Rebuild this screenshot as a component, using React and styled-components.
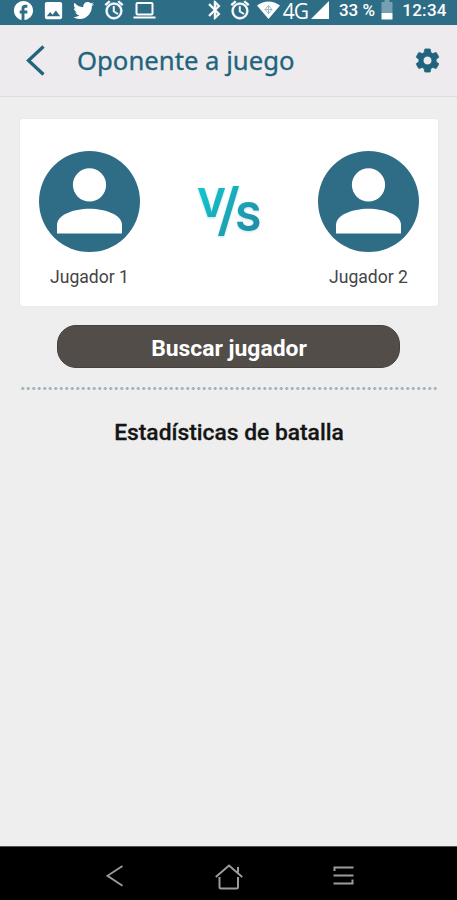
import React from 'react'
import styled, { createGlobalStyle } from 'styled-components'
import {
  MdAlarm,
  MdBluetooth,
  MdFacebook,
  MdImage,
  MdSettings,
} from 'react-icons/md'
import { FaTwitter } from 'react-icons/fa'

const GlobalStyle = createGlobalStyle`
  * {
    box-sizing: border-box;
  }

  body {
    margin: 0;
    background: #eee;
    font-family: Roboto, sans-serif;
  }
`

const Screen = styled.div`
  display: flex;
  flex-direction: column;
  height: 900px;
  overflow: hidden;
  background: #eee;
`

const StatusBar = styled.div`
  display: flex;
  flex: none;
  justify-content: space-between;
  height: 25px;
  padding: 0 10px 0 12px;
  background: #2e6d86;
  color: #fff;
`

const StatusGroup = styled.div`
  display: flex;
  align-items: center;
  height: 20px;
`

const StatusItem = styled.span`
  display: flex;
  flex: none;
  align-items: center;
  justify-content: center;
  width: ${props => props.$width}px;
  height: 20px;
  margin-left: ${props => props.$gap || 0}px;

  svg {
    flex: none;
  }
`

const BoldItem = styled(StatusItem)`
  path:not([fill='none']) {
    stroke: currentColor;
    stroke-width: 0.6px;
  }
`

const StatusText = styled(StatusItem)`
  font-size: 17px;
  font-weight: 500;
  line-height: 20px;
  letter-spacing: ${props => props.$spacing || 0}px;
  white-space: nowrap;
`

const Network = styled(StatusText)`
  padding-top: 2px;
  font-family: 'Open Sans', sans-serif;
  font-size: 21px;
  font-weight: 400;
`

const Header = styled.header`
  display: flex;
  flex: none;
  align-items: center;
  height: 72px;
  padding: 0 15px 0 26px;
  border-bottom: 1px solid #dcdbdd;
  background: #edebee;
  color: #20647d;
`

const Title = styled.h1`
  flex-grow: 1;
  margin: 0 0 0 31px;
  font-family: 'Noto Sans', sans-serif;
  font-size: 25.7px;
  font-weight: 400;
  line-height: 34px;
  -webkit-text-stroke: 0.3px #20647d;
`

const Main = styled.main`
  flex-grow: 1;
  padding: 22px 19px 0 20px;
`

const Card = styled.section`
  display: flex;
  justify-content: space-between;
  height: 187px;
  padding: 32px 19px 0;
  border-radius: 3px;
  background: #fff;
  box-shadow: 0 0 2px rgba(0, 0, 0, 0.07);
`

const PlayerColumn = styled.div`
  display: flex;
  flex-direction: column;
  align-items: center;
  width: 101px;
`

const PlayerName = styled.div`
  margin-top: 14px;
  color: #444;
  font-size: 17.6px;
  line-height: 22px;
  white-space: nowrap;
`

const VersusLogo = styled.svg`
  width: 76px;
  height: 60px;
  margin-top: 30px;
  overflow: visible;
  font-family: Inter, sans-serif;
  font-weight: 700;
  filter: drop-shadow(0 1px 1px rgba(30, 160, 180, 0.3));
`

const SearchButton = styled.button`
  display: block;
  width: 343px;
  height: 43px;
  margin: 19px 0 0 37px;
  padding: 4px 0 0 1px;
  border: 1px solid #45413e;
  border-radius: 19px;
  background: #524d49;
  color: #fff;
  font-family: Roboto, sans-serif;
  font-size: 22.9px;
  font-weight: 700;
`

const Divider = styled.div`
  height: 3px;
  margin-top: 19px;
  background: radial-gradient(circle, #9bb4bc 1.2px, transparent 1.8px) 0 0 / 5.5px 3px repeat-x;
`

const SectionTitle = styled.h2`
  margin: 28px 0 0;
  color: #151515;
  font-size: 22.8px;
  font-weight: 500;
  line-height: 30px;
  text-align: center;
  -webkit-text-stroke: 0.3px #151515;
`

const NavBar = styled.nav`
  display: flex;
  flex: none;
  justify-content: space-between;
  height: 54px;
  padding: 17px 103px 0 106px;
  border-top: 1px solid #555;
  background: #000;
  color: #9c9c9c;
`

const LaptopIcon = () => (
  <svg width="23" height="18" viewBox="0 0 23 18" fill="none" stroke="currentColor">
    <rect x="3.5" y="2" width="16" height="11.5" rx="1" strokeWidth="2" />
    <path d="M.5 16.5h22" strokeWidth="2" />
  </svg>
)

const WifiIcon = () => (
  <svg width="23" height="18" viewBox="0 0 23 18">
    <path d="M0 4.5Q11.500-3.500 23 4.500L11.500 18Z" fill="currentColor" />
    <path d="M11.500 4.500l3.500 4-3.500 4-3.500-4zM11.500 4.500v8M8 8.500h7" fill="none" stroke="#9abac6" strokeWidth="1" />
  </svg>
)

const SignalIcon = () => (
  <svg width="18" height="18" viewBox="0 0 18 18">
    <path d="M18 0v18H0z" fill="currentColor" />
  </svg>
)

const BatteryIcon = () => (
  <svg width="12" height="20" viewBox="0 0 12 20">
    <path d="M3.500 0h5v2H11.500v11H.5V2h3z" fill="#75a0b1" />
    <path d="M.5 13h11v6.500H.5z" fill="currentColor" />
  </svg>
)

const BackIcon = () => (
  <svg width="20" height="32" viewBox="0 0 20 32">
    <path d="M17.500 1.500L2.500 15.500l15 14" fill="none" stroke="currentColor" strokeWidth="3.300" />
  </svg>
)

const Avatar = () => (
  <svg width="101" height="101" viewBox="0 0 101 101">
    <circle cx="50.5" cy="50.5" r="50.5" fill="#2f6d87" />
    <circle cx="50.5" cy="33.9" r="16.6" fill="#fff" />
    <path d="M18 82.500V74C18 64 34 57.700 50.500 57.700S83 64 83 74v8.500z" fill="#fff" />
  </svg>
)

const Versus = () => (
  <VersusLogo viewBox="0 0 76 60">
    <defs>
      <linearGradient id="versus" gradientUnits="userSpaceOnUse" x1="8" y1="8" x2="65" y2="52">
        <stop offset="0" stopColor="#12c6cd" />
        <stop offset="1" stopColor="#238ba5" />
      </linearGradient>
    </defs>
    <g fill="url(#versus)">
      <text x="6" y="36" fontSize="39" textLength="29" lengthAdjust="spacingAndGlyphs">V</text>
      <path d="M42 5h6L33 55H27z" />
      <text x="44.5" y="50" fontSize="39">S</text>
    </g>
  </VersusLogo>
)

const Player = ({ name }) => (
  <PlayerColumn>
    <Avatar />
    <PlayerName>{name}</PlayerName>
  </PlayerColumn>
)

const NavIcons = () => (
  <NavBar>
    <svg width="18" height="24" viewBox="0 0 18 24" fill="none" stroke="currentColor" strokeWidth="1.8">
      <path d="M16.500 2L1.500 11.800l15 10" />
    </svg>
    <svg width="28" height="26" viewBox="0 0 28 26" fill="none" stroke="currentColor" strokeWidth="2">
      <path d="M.8 13L14 1.500 27.200 13M23 8.500V3" />
      <path d="M4.500 13v10q0 1.500 1.500 1.500h15.500q1.500 0 1.500-1.500V13" />
    </svg>
    <svg width="21" height="24" viewBox="0 0 21 24" fill="none" stroke="currentColor" strokeWidth="2">
      <path d="M20.500 3.500H1.500V7M.5 11.500h20M.5 19.500h19V15.500" />
    </svg>
  </NavBar>
)

const App = () => {
  return (
    <Screen>
      <GlobalStyle />
      <StatusBar>
        <StatusGroup>
          <StatusItem $width={23}><MdFacebook size={23} /></StatusItem>
          <StatusItem $width={23} $gap={7}><MdImage size={23} /></StatusItem>
          <StatusItem $width={21} $gap={8}><FaTwitter size={21} /></StatusItem>
          <BoldItem $width={22} $gap={9}><MdAlarm size={22} /></BoldItem>
          <StatusItem $width={23} $gap={8}><LaptopIcon /></StatusItem>
        </StatusGroup>
        <StatusGroup>
          <BoldItem $width={22}><MdBluetooth size={22} /></BoldItem>
          <BoldItem $width={22} $gap={3}><MdAlarm size={22} /></BoldItem>
          <StatusItem $width={23} $gap={6}><WifiIcon /></StatusItem>
          <Network $width={25} $gap={3} $spacing={-1}>4G</Network>
          <StatusItem $width={18} $gap={3}><SignalIcon /></StatusItem>
          <StatusText $width={38} $gap={9}>33 %</StatusText>
          <StatusItem $width={12} $gap={5}><BatteryIcon /></StatusItem>
          <StatusText $width={45} $gap={9} $spacing={0.3}>12:34</StatusText>
        </StatusGroup>
      </StatusBar>
      <Header>
        <BackIcon />
        <Title>Oponente a juego</Title>
        <BoldItem $width={30}><MdSettings size={29} /></BoldItem>
      </Header>
      <Main>
        <Card>
          <Player name="Jugador 1" />
          <Versus />
          <Player name="Jugador 2" />
        </Card>
        <SearchButton type="button">Buscar jugador</SearchButton>
        <Divider />
        <SectionTitle>Estadísticas de batalla</SectionTitle>
      </Main>
      <NavIcons />
    </Screen>
  )
}

export default App
